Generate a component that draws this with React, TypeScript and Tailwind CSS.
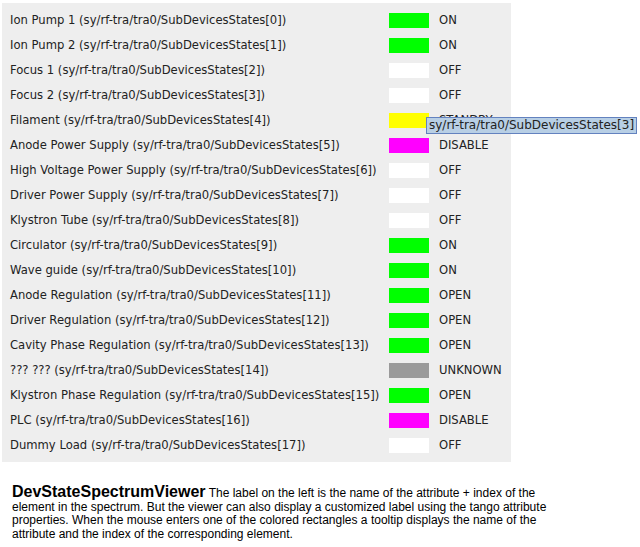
import React from "react";

const rows: [string, string, string][] = [
  ["Ion Pump 1 (sy/rf-tra/tra0/SubDevicesStates[0])", "bg-[#00ff00]", "ON"],
  ["Ion Pump 2 (sy/rf-tra/tra0/SubDevicesStates[1])", "bg-[#00ff00]", "ON"],
  ["Focus 1 (sy/rf-tra/tra0/SubDevicesStates[2])", "bg-white", "OFF"],
  ["Focus 2 (sy/rf-tra/tra0/SubDevicesStates[3])", "bg-white", "OFF"],
  ["Filament (sy/rf-tra/tra0/SubDevicesStates[4])", "bg-[#ffff00]", "STANDBY"],
  ["Anode Power Supply  (sy/rf-tra/tra0/SubDevicesStates[5])", "bg-[#ff00ff]", "DISABLE"],
  ["High Voltage Power Supply (sy/rf-tra/tra0/SubDevicesStates[6])", "bg-white", "OFF"],
  ["Driver Power Supply (sy/rf-tra/tra0/SubDevicesStates[7])", "bg-white", "OFF"],
  ["Klystron Tube (sy/rf-tra/tra0/SubDevicesStates[8])", "bg-white", "OFF"],
  ["Circulator (sy/rf-tra/tra0/SubDevicesStates[9])", "bg-[#00ff00]", "ON"],
  ["Wave guide (sy/rf-tra/tra0/SubDevicesStates[10])", "bg-[#00ff00]", "ON"],
  ["Anode Regulation (sy/rf-tra/tra0/SubDevicesStates[11])", "bg-[#00ff00]", "OPEN"],
  ["Driver Regulation (sy/rf-tra/tra0/SubDevicesStates[12])", "bg-[#00ff00]", "OPEN"],
  ["Cavity Phase Regulation (sy/rf-tra/tra0/SubDevicesStates[13])", "bg-[#00ff00]", "OPEN"],
  ["??? ??? (sy/rf-tra/tra0/SubDevicesStates[14])", "bg-[#9a9a9a]", "UNKNOWN"],
  ["Klystron Phase Regulation (sy/rf-tra/tra0/SubDevicesStates[15])", "bg-[#00ff00]", "OPEN"],
  ["PLC (sy/rf-tra/tra0/SubDevicesStates[16])", "bg-[#ff00ff]", "DISABLE"],
  ["Dummy Load (sy/rf-tra/tra0/SubDevicesStates[17])", "bg-white", "OFF"],
];

export default function App() {
  return (
    <div className="w-[640px] h-[547px] bg-white relative overflow-hidden">
      <div className="pt-[3px] pl-[2px]">
        <div
          className="w-[509px] bg-[#eeeeee] pt-[5px] pb-[4px] text-[11.6px] text-[#222222]"
          style={{ fontFamily: '"DejaVu Sans", sans-serif' }}
        >
          {rows.map(([label, color, value], i) => (
            <div key={i} className="flex items-center h-[25px]">
              <div className="w-[387px] pl-[8px] whitespace-nowrap">{label}</div>
              <div className={`w-[40px] h-[15px] shrink-0 ${color}`} />
              <div className="pl-[10px] whitespace-nowrap">{value}</div>
            </div>
          ))}
        </div>
      </div>
      <div
        className="absolute left-[426px] top-[117px] h-[17px] px-[2px] bg-[#b8cfe5] border border-[#6382bf] text-[12px] leading-[15px] text-[#222222] whitespace-nowrap"
        style={{ fontFamily: '"DejaVu Sans", sans-serif' }}
      >
        sy/rf-tra/tra0/SubDevicesStates[3]
      </div>
      <div
        className="pl-[12px] pt-[23px] text-[12px] leading-[13.7px] text-black whitespace-nowrap"
        style={{ fontFamily: '"Liberation Sans", Arial, sans-serif' }}
      >
        <span className="font-bold text-[16px]">DevStateSpectrumViewer</span> The label on the left is the name of the attribute + index of the
        <br />
        element in the spectrum. But the viewer can also display a customized label using the tango attribute
        <br />
        properties. When the mouse enters one of the colored rectangles a tooltip displays the name of the
        <br />
        attribute and the index of the corresponding element.
      </div>
    </div>
  );
}
